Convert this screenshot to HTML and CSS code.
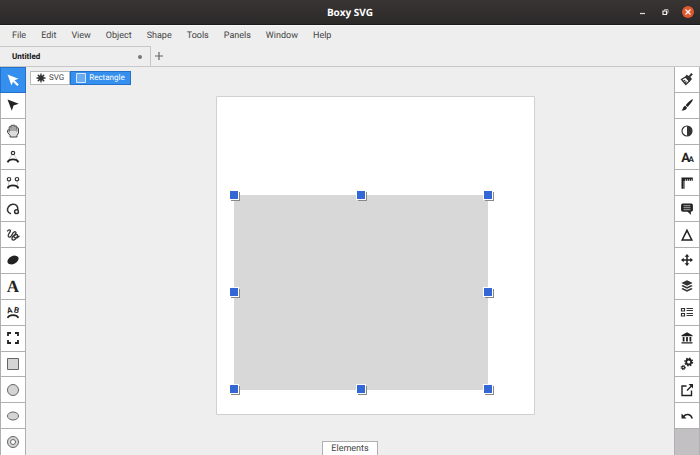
FILE: index.html
```
<!DOCTYPE html>
<html lang="en">
<head>
    <meta charset="utf-8">
    <title>Boxy SVG</title>
    <link rel="stylesheet" href="styles.css">
</head>
<body>
    <!-- Window title bar -->
    <header class="titlebar">
        <h1 class="title">Boxy SVG</h1>
        <div class="window-buttons">
            <button type="button" aria-label="Minimize"><svg viewBox="0 0 12 12"><path d="M4 7.500h5" stroke="#ddd" stroke-width="1.200"/></svg></button>
            <button type="button" aria-label="Restore"><svg viewBox="0 0 12 12"><path d="M5.500 5V3.500H9V7H7.500" fill="none" stroke="#aaa"/><path d="M4 5h3.500v3.500H4z" fill="none" stroke="#eee" stroke-width="1.200"/></svg></button>
            <button type="button" class="close" aria-label="Close"><svg viewBox="0 0 12 12"><path d="M3.500 3.500l5 5M8.500 3.500l-5 5" stroke="#fff" stroke-width="1.200"/></svg></button>
        </div>
    </header>

    <nav class="menubar">
        <button type="button">File</button>
        <button type="button">Edit</button>
        <button type="button">View</button>
        <button type="button">Object</button>
        <button type="button">Shape</button>
        <button type="button">Tools</button>
        <button type="button">Panels</button>
        <button type="button">Window</button>
        <button type="button">Help</button>
    </nav>

    <div class="tabs">
        <button type="button" class="tab">Untitled <span class="modified"></span></button>
        <button type="button" class="new-tab" aria-label="New tab"><svg viewBox="0 0 10 10"><path d="M5 1v8M1 5h8" stroke="#666" stroke-width="1.200"/></svg></button>
    </div>

    <main class="editor">
        <!-- Tools -->
        <div class="toolbar tools">
            <button type="button" class="active" aria-label="Transform"><svg viewBox="0 0 16 16"><path d="M2.500 2.500l11 4.200-4 1.600 4.300 4.200-1.600 1.500-4.200-4.200-1.500 3.800z" fill="#fff"/></svg></button>
            <button type="button" aria-label="Edit"><svg viewBox="0 0 16 16"><path d="M2.500 2.500l11.300 4.300-5.300 1.700-1.700 5.300z" fill="#222"/></svg></button>
            <button type="button" aria-label="Pan"><svg viewBox="0 0 16 16"><path d="M5 14v-1.500L2.500 9.300V7.500c0-1 1.500-1 1.700 0V4.300c0-1.200 1.700-1.200 1.800 0V3c0-1.200 1.900-1.200 2 0v-.3c.1-1 1.900-1 2 .3v.5c.2-1 1.800-.9 1.800.3v1.500c.2-.9 1.700-.8 1.700.3V10L12 12.500V14z" fill="#ddd" stroke="#444"/><path d="M4.200 7v2.500M6 4v4M8 3v5M10 3v5M11.800 5v3.500" stroke="#555" stroke-width=".8"/></svg></button>
            <button type="button" aria-label="Quadratic bezier"><svg viewBox="0 0 16 16" fill="none"><path d="M7 5.500L3 12M9 5.500l4 6.500" stroke="#bbb" stroke-width=".8"/><circle cx="8" cy="4" r="1.700" stroke="#333" stroke-width="1.200"/><path d="M2.500 13.300c2-3.800 9-3.800 11 0" stroke="#222" stroke-width="1.700"/></svg></button>
            <button type="button" aria-label="Cubic bezier"><svg viewBox="0 0 16 16" fill="none"><path d="M4 6l-1 6M12 6l1 6" stroke="#bbb" stroke-width=".8"/><circle cx="4" cy="4.200" r="1.700" stroke="#333" stroke-width="1.200"/><circle cx="12" cy="4.200" r="1.700" stroke="#333" stroke-width="1.200"/><path d="M2.500 13.300c2-3.800 9-3.800 11 0" stroke="#222" stroke-width="1.700"/></svg></button>
            <button type="button" aria-label="Arc"><svg viewBox="0 0 16 16" fill="none" stroke="#333" stroke-width="1.500"><path d="M6 12.700C2.500 12.200 1.500 8.500 3.500 5.700S10 2.200 12 5c.8 1.300 1 2.500.6 4"/><circle cx="11.500" cy="10.700" r="1.900"/></svg></button>
            <button type="button" aria-label="Freehand"><svg viewBox="0 0 16 16" fill="none" stroke="#333" stroke-width="1.300" stroke-linecap="round"><path d="M2.500 4C3.500 2.300 5.700 2.500 5.400 4S2.300 8 3.300 9.500s3 .2 4-2.300S10.500 4 11 5.500s-3.500 3.200-4 5.500 2 2.800 3.800.7 2.500-4.200.7-4.200-3.500 2-2 3 3.200.3 4.500-1.200"/></svg></button>
            <button type="button" aria-label="Blob"><svg viewBox="0 0 16 16"><ellipse cx="8" cy="8" rx="5.900" ry="3.900" transform="rotate(-27 8 8)" fill="#222"/></svg></button>
            <button type="button" aria-label="Text"><svg viewBox="0 0 16 16"><text x="8" y="13.500" class="glyph glyph-serif">A</text></svg></button>
            <button type="button" aria-label="Text on path"><svg viewBox="0 0 16 16"><text x="4.500" y="9" class="glyph glyph-small" transform="rotate(-12 4 6)">A</text><text x="11.500" y="9" class="glyph glyph-small" transform="rotate(12 12 6)">B</text><path d="M2.500 13.800c2-3.600 9-3.600 11 0" fill="none" stroke="#222" stroke-width="1.600"/></svg></button>
            <button type="button" aria-label="View"><svg viewBox="0 0 16 16" fill="none" stroke="#222" stroke-width="1.800"><path d="M3 6V3h3M10 3h3v3M13 10v3h-3M6 13H3v-3"/></svg></button>
            <button type="button" aria-label="Rectangle"><svg viewBox="0 0 16 16"><path d="M2.500 2.500h11v11h-11z" fill="#d4d4d4" stroke="#666"/></svg></button>
            <button type="button" aria-label="Circle"><svg viewBox="0 0 16 16"><circle cx="8" cy="8" r="5.500" fill="#d4d4d4" stroke="#666"/></svg></button>
            <button type="button" aria-label="Ellipse"><svg viewBox="0 0 16 16"><ellipse cx="8" cy="8" rx="5.500" ry="4" fill="#d4d4d4" stroke="#666"/></svg></button>
            <button type="button" aria-label="Ring"><svg viewBox="0 0 16 16"><circle cx="8" cy="8" r="5.500" fill="#d4d4d4" stroke="#666"/><circle cx="8" cy="8" r="2.500" fill="#fff" stroke="#666"/></svg></button>
        </div>

        <section class="workspace">
            <nav class="breadcrumb">
                <button type="button"><svg viewBox="0 0 10 10"><path d="M5 .5v9M.5 5h9M1.800 1.800l6.400 6.400M8.200 1.800L1.800 8.200" stroke="#333" stroke-width="1.300"/><circle cx="5" cy="5" r="2.700" fill="#333"/></svg>SVG</button>
                <button type="button" class="current"><svg viewBox="0 0 10 10"><path d="M.5.5h9v9h-9z" fill="#6aacf3" stroke="#d5e8fd"/></svg>Rectangle</button>
            </nav>

            <svg class="artboard" viewBox="0 0 320 320">
                <defs>
                    <g id="handle">
                        <path d="M-3 -3h9v9h-9z" fill="#888"/>
                        <path d="M-5 -5h10v10h-10z" fill="#fff"/>
                        <path d="M-4 -4h8v8h-8z" fill="#3367d6"/>
                    </g>
                </defs>
                <path d="M.5.5h318v318H.5z" fill="#fff" stroke="#d0d0d0"/>
                <rect x="18" y="99" width="254" height="195" fill="#d8d8d8"/>
                <use href="#handle" x="18" y="99"/>
                <use href="#handle" x="145" y="99"/>
                <use href="#handle" x="272" y="99"/>
                <use href="#handle" x="18" y="196"/>
                <use href="#handle" x="272" y="196"/>
                <use href="#handle" x="18" y="293"/>
                <use href="#handle" x="145" y="293"/>
                <use href="#handle" x="272" y="293"/>
            </svg>

            <button type="button" class="elements">Elements</button>
        </section>

        <!-- Panels -->
        <div class="toolbar panels">
            <button type="button" aria-label="Fill"><svg viewBox="0 0 16 16"><path d="M6.500 6L2.500 8.500l4.300 5L10.500 10z" fill="#fff" stroke="#333" stroke-width="1.300"/><path d="M4 10.500l2.200-1.200M5.500 12l2-1.500" stroke="#333" stroke-width="1.200"/><path d="M6.200 5.200l1.500-1.400L9.800 5l2.400-3 1.700 1.500-2.600 2.600 1.700 2-1.300 1.500-1.500 1.300z" fill="#333"/></svg></button>
            <button type="button" aria-label="Stroke"><svg viewBox="0 0 16 16" fill="#222"><path d="M13.700 2.300c.9.800-3.500 6.200-5.200 7.600L6.600 8.200C8.200 6.300 12.800 1.700 13.700 2.300z"/><path d="M6.100 8.800l1.900 1.800c-.4 2.400-3 3.300-5.700 2.800 2.300-.9 1.300-3.800 3.800-4.600z"/></svg></button>
            <button type="button" aria-label="Compositing"><svg viewBox="0 0 16 16"><circle cx="8" cy="8" r="5" fill="#fff" stroke="#333" stroke-width="1.200"/><path d="M8 3a5 5 0 0 1 0 10z" fill="#333"/></svg></button>
            <button type="button" aria-label="Typography"><svg viewBox="0 0 16 16"><text x="6.500" y="12.500" class="glyph glyph-sans">A</text><text x="12.200" y="12.500" class="glyph glyph-small">A</text></svg></button>
            <button type="button" aria-label="Geometry"><svg viewBox="0 0 16 16"><path d="M2.500 2.500h11.300v3.200H5.700v8.100H2.500z" fill="#222"/><path d="M6.500 4.300v1.400M8.500 4.300v1.400M10.500 4.300v1.400M12.500 4.300v1.400M4.300 7h1.400M4.300 9h1.400M4.300 11h1.400M4.300 13h1.400" stroke="#fff" stroke-width=".8"/></svg></button>
            <button type="button" aria-label="Metadata"><svg viewBox="0 0 16 16"><path d="M4 2.500h8c1 0 1.900.7 1.900 1.700v4.900c0 1-.9 1.700-1.900 1.700h-.3l.4 3.200-3.500-3.200H4c-1 0-1.900-.7-1.900-1.700V4.200c0-1 .9-1.700 1.900-1.700z" fill="#222"/><path d="M4.500 4.700h7M4.500 6.700h7M4.500 8.700h7" stroke="#ccc" stroke-width=".8"/></svg></button>
            <button type="button" aria-label="Shape"><svg viewBox="0 0 16 16"><path d="M8 3.300L12.800 13H3.200z" fill="none" stroke="#222" stroke-width="1.500"/></svg></button>
            <button type="button" aria-label="Arrangement"><svg viewBox="0 0 16 16"><path d="M8 4v8M4 8h8" stroke="#222" stroke-width="1.500"/><path d="M8 2l2.300 2.700H5.700zM8 14l2.300-2.700H5.700zM2 8l2.700-2.300v4.600zM14 8l-2.700-2.300v4.600z" fill="#222"/></svg></button>
            <button type="button" aria-label="Layers"><svg viewBox="0 0 16 16" fill="#333"><path d="M8 2.300l5.700 2.700L8 7.700 2.300 5z"/><path d="M3.800 7L8 9l4.200-2 1.500 1L8 10.700 2.300 8z"/><path d="M3.800 10L8 12l4.200-2 1.500 1L8 13.700 2.300 11z"/></svg></button>
            <button type="button" aria-label="Defs"><svg viewBox="0 0 16 16" fill="none" stroke="#333"><path d="M2.500 4.500h3v2.500h-3zM2.500 9.500h3V12h-3z" stroke-width="1.200"/><path d="M7.500 4.500H14M7.500 6.500H14M7.500 9.500H14M7.500 11.500H14"/></svg></button>
            <button type="button" aria-label="Library"><svg viewBox="0 0 16 16" fill="#222"><path d="M8 2.300l5.500 2.900v1h-11v-1zM3.700 7h1.800v4.500H3.700zM7.100 7h1.800v4.500H7.100zM10.500 7h1.800v4.500h-1.800zM2.500 12.200h11v1.400h-11z"/></svg></button>
            <button type="button" aria-label="Generators"><svg viewBox="0 0 16 16" fill="none" stroke="#222"><circle cx="9.700" cy="6" r="2.500" stroke-width="1.800"/><circle cx="9.700" cy="6" r="3.800" stroke-width="1.400" stroke-dasharray="1.490 1.490"/><circle cx="4.200" cy="11.500" r="1.300" stroke-width="1.200"/><circle cx="4.200" cy="11.500" r="2.200" stroke-dasharray=".86 .86"/></svg></button>
            <button type="button" aria-label="Export"><svg viewBox="0 0 16 16" fill="none" stroke="#222" stroke-width="1.400"><path d="M7.500 4H3v9.500h9.500V8.500M8 8.500L12.500 4"/><path d="M9.500 2h4.500v4.500z" fill="#222" stroke="none"/></svg></button>
            <button type="button" aria-label="History"><svg viewBox="0 0 16 16"><path d="M4.500 8.500c2.500-3 7-2.700 8.800 2" fill="none" stroke="#222" stroke-width="1.500"/><path d="M2.500 5.500v5h5z" fill="#222"/></svg></button>
        </div>
    </main>
</body>
</html>
```

FILE: styles.css
```
* {
    box-sizing: border-box;
}

body {
    margin: 0;
    height: 100vh;
    display: flex;
    flex-direction: column;
    overflow: hidden;
    background-color: #eee;
    color: #444;
    font: 9px/12px Roboto, sans-serif;
    text-rendering: geometricPrecision;
}

button {
    margin: 0;
    padding: 0;
    border: none;
    background: none;
    color: inherit;
    font: inherit;
    text-rendering: inherit;
    cursor: pointer;
}

svg {
    display: block;
}

/* Title bar */
.titlebar {
    display: grid;
    grid-template-columns: 1fr auto 1fr;
    align-items: center;
    height: 25px;
    background: linear-gradient(#383533, #2b2929);
    border-bottom: 1px solid #1c1a1a;
    color: #fff;
}

.title {
    grid-column: 2;
    margin: 0;
    font: bold 10px/14px "Open Sans", sans-serif;
}

.window-buttons {
    display: flex;
    justify-content: flex-end;
    gap: 11px;
    padding-right: 6px;
}

.window-buttons svg {
    width: 12px;
    height: 12px;
}

.window-buttons .close {
    border-radius: 50%;
    background-color: #e2582d;
}

/* Menu */
.menubar {
    display: flex;
    gap: 15px;
    height: 21px;
    padding: 0 12px;
    border-top: 1px solid #f8f8f8;
}

/* Document tabs */
.tabs {
    display: flex;
    height: 21px;
    border-bottom: 1px solid #c8c8c8;
}

.tab {
    display: flex;
    align-items: center;
    justify-content: space-between;
    width: 151px;
    padding: 0 8px 0 12px;
    border-top: 1px solid #c8c8c8;
    border-right: 1px solid #c8c8c8;
    color: #111;
    font-size: 8px;
    font-weight: bold;
}

.modified {
    width: 4px;
    height: 4px;
    border-radius: 50%;
    background-color: #777;
}

.new-tab {
    padding: 0 3px;
}

.new-tab svg {
    width: 10px;
    height: 10px;
}

/* Editor */
.editor {
    flex: 1;
    min-height: 0;
    display: flex;
}

.toolbar {
    display: grid;
    grid-template-rows: repeat(15, 1fr);
    width: 26px;
    border: solid #b0b0b0;
    border-width: 0 1px;
    background-color: #c2c0c2;
}

.toolbar button {
    display: flex;
    align-items: center;
    justify-content: center;
    min-height: 0;
    border-bottom: 1px solid #b0b0b0;
    background-color: #fff;
}

.toolbar svg {
    width: 16px;
    height: 16px;
}

.toolbar .active {
    margin: 0 -1px;
    border: 1px solid #2470c8;
    background-color: #348fee;
}

.tools button:last-child {
    border-bottom: none;
}

.glyph {
    fill: #222;
    font-weight: bold;
    text-anchor: middle;
}

.glyph-serif {
    font-family: "Liberation Serif", serif;
    font-size: 17px;
}

.glyph-sans {
    font-size: 13px;
}

.glyph-small {
    font-size: 8px;
}

.workspace {
    position: relative;
    flex: 1;
    display: flex;
    flex-direction: column;
    justify-content: space-between;
    align-items: center;
}

.breadcrumb {
    display: flex;
    align-self: flex-start;
    margin: 4px;
    font-size: 8px;
}

.breadcrumb button {
    display: flex;
    align-items: center;
    gap: 3px;
    height: 14px;
    padding: 0 5px;
    border: 1px solid #bbb;
    background-color: #fff;
}

.breadcrumb .current {
    border-color: #2470c8;
    background-color: #348fee;
    color: #fff;
}

.breadcrumb svg {
    width: 10px;
    height: 10px;
}

.artboard {
    position: absolute;
    left: 190px;
    top: 29px;
    width: 320px;
    height: 320px;
}

.elements {
    height: 14px;
    padding: 0 8px;
    border: 1px solid #b0b0b0;
    border-bottom: none;
    background-color: #fff;
}
```
